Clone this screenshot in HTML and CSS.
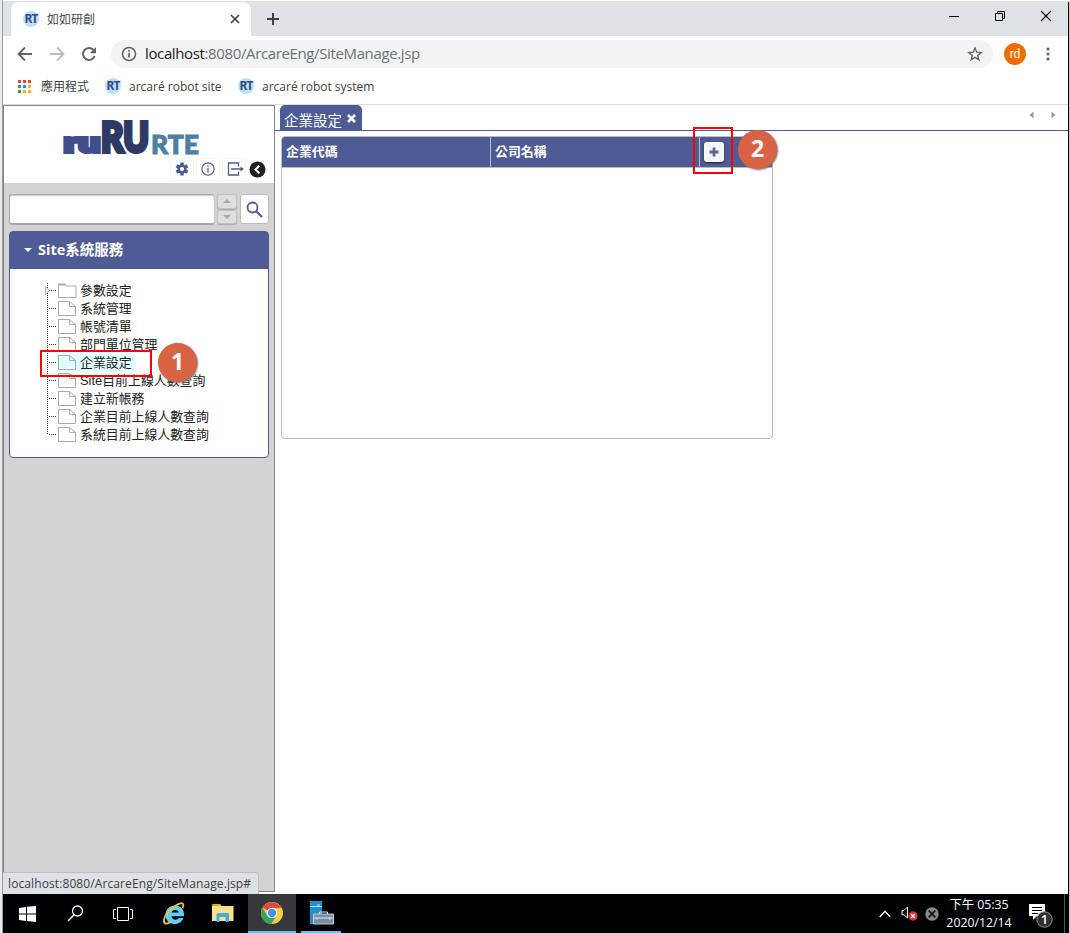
FILE: index.html
```html
<!DOCTYPE html>
<html lang="zh-Hant">
<head>
<meta charset="utf-8">
<title>如如研創</title>
<link rel="stylesheet" href="styles.css">
</head>
<body>
<div class="screen">
  <aside class="edge"></aside>
  <div class="window">
    <div class="tabstrip">
      <div class="browser-tab">
        <span class="favicon">RT</span>
        <span class="tab-title">如如研創</span>
        <svg class="tab-close" width="10" height="10" viewBox="0 0 10 10"><path d="M1 1l8 8M9 1l-8 8" stroke="#3c4043" stroke-width="1.7"/></svg>
      </div>
      <svg class="new-tab" width="12" height="12" viewBox="0 0 12 12"><path d="M6 0v12M0 6h12" stroke="#3c4043" stroke-width="2"/></svg>
      <div class="window-buttons">
        <svg width="12" height="12" viewBox="0 0 12 12"><path d="M1 6.5h10" stroke="#000"/></svg>
        <svg width="12" height="12" viewBox="0 0 12 12"><path d="M1.5 3.5h7v7h-7zM3.500 3V1.500h7v7H9" fill="none" stroke="#000"/></svg>
        <svg width="12" height="12" viewBox="0 0 12 12"><path d="M1 1l10 10M11 1L1 11" stroke="#000" stroke-width="1.100"/></svg>
      </div>
    </div>
    <div class="toolbar">
      <svg class="nav" width="16" height="16" viewBox="0 0 16 16"><path d="M15 8H2M8 1.500L1.500 8L8 14.500" fill="none" stroke="#5f6368" stroke-width="1.800"/></svg>
      <svg class="nav" width="16" height="16" viewBox="0 0 16 16"><path d="M1 8h13M8 1.500L14.500 8L8 14.500" fill="none" stroke="#babcbe" stroke-width="1.800"/></svg>
      <svg class="nav" width="16" height="16" viewBox="0 0 16 16"><path d="M13.600 10.200A6 6 0 1 1 12.500 4" fill="none" stroke="#5f6368" stroke-width="2"/><path d="M15 1v6.200H8.800z" fill="#5f6368"/></svg>
      <div class="omnibox">
        <svg width="16" height="16" viewBox="0 0 16 16"><circle cx="8" cy="8" r="6.500" fill="none" stroke="#5f6368" stroke-width="1.500"/><path d="M8 7v4.500M8 4v1.700" stroke="#5f6368" stroke-width="1.700"/></svg>
        <span class="url"><b>localhost</b>:8080/ArcareEng/SiteManage.jsp</span>
        <svg class="star" width="16" height="16" viewBox="0 0 16 16"><path d="M8 2l1.700 4.200 4.500.3-3.500 2.900 1.100 4.400L8 11.400l-3.800 2.400 1.100-4.400L1.800 6.500l4.500-.3z" fill="none" stroke="#5f6368" stroke-width="1.400"/></svg>
      </div>
      <span class="avatar">rd</span>
      <svg class="kebab" width="4" height="14" viewBox="0 0 4 14" fill="#5f6368"><circle cx="2" cy="2" r="1.600"/><circle cx="2" cy="7" r="1.600"/><circle cx="2" cy="12" r="1.600"/></svg>
    </div>
    <div class="bookmarks">
      <svg class="apps" width="13" height="13" viewBox="0 0 13 13"><path d="M0 0h3v3H0zM5 0h3v3H5zM10 0h3v3h-3z" fill="#ea4335"/><path d="M0 5h3v3H0zM0 10h3v3H0z" fill="#2ea052"/><path d="M5 5h3v3H5z" fill="#1a8cf0"/><path d="M5 10h3v3H5z" fill="#f9b418"/><path d="M10 5h3v3h-3zM10 10h3v3h-3z" fill="#f9b418"/></svg>
      <span class="apps-label">應用程式</span>
      <span class="favicon">RT</span><span class="bookmark first">arcaré robot site</span>
      <span class="favicon">RT</span><span class="bookmark">arcaré robot system</span>
    </div>
    <div class="page">
      <div class="sidebar">
        <div class="brand">
          <svg class="logo" width="140" height="40" viewBox="0 0 140 40">
            <g font-family="Lato" font-weight="900">
              <text x="2" y="33" font-size="27" textLength="36" lengthAdjust="spacingAndGlyphs" fill="#404f8c" stroke="#404f8c" stroke-width="4">ru</text>
              <text x="39" y="33" font-size="41" textLength="48" lengthAdjust="spacingAndGlyphs" fill="#2e3966" stroke="#2e3966" stroke-width="4">RU</text>
              <text x="89" y="34.500" font-size="27" textLength="48" lengthAdjust="spacingAndGlyphs" fill="#4d7f9e" stroke="#4d7f9e" stroke-width="1">RTE</text>
            </g>
          </svg>
          <div class="tools">
            <span class="tool"><svg width="14" height="14" viewBox="0 0 14 14"><g stroke="#4f5b94" stroke-width="3.400"><path d="M7 .6v12.800M1.450 3.800l11.100 6.400M1.450 10.200l11.100-6.400"/></g><circle cx="7" cy="7" r="4.700" fill="#4f5b94"/><circle cx="7" cy="7" r="2.100" fill="#fff"/></svg></span>
            <span class="tool"><svg width="14" height="14" viewBox="0 0 14 14"><circle cx="7" cy="7" r="6.100" fill="none" stroke="#4f5b94" stroke-width="1.200"/><path d="M7 6v4.500M7 3.500V5" stroke="#4f5b94" stroke-width="1.300"/></svg></span>
            <span class="tool"><svg width="17" height="14" viewBox="0 0 17 14"><path d="M11.500 4.500V1h-10v12h10V9.500M4 7h10.500" fill="none" stroke="#4f5b94" stroke-width="1.300"/><path d="M13.500 4.500L17 7l-3.500 2.500z" fill="#4f5b94"/></svg></span>
            <svg class="collapse" width="17" height="17" viewBox="0 0 17 17"><circle cx="8.500" cy="8.500" r="8" fill="#231f20"/><path d="M10.300 4.700L6.500 8.500l3.800 3.800" fill="none" stroke="#fff" stroke-width="2"/></svg>
          </div>
        </div>
        <div class="search">
          <input class="search-input" type="text" aria-label="search">
          <div class="spinner">
            <span><svg width="8" height="4" viewBox="0 0 8 4"><path d="M0 4l4-4 4 4z" fill="#a5a9bd"/></svg></span>
            <span><svg width="8" height="4" viewBox="0 0 8 4"><path d="M0 0l4 4 4-4z" fill="#a5a9bd"/></svg></span>
          </div>
          <button class="search-button" aria-label="search"><svg width="17" height="17" viewBox="0 0 17 17"><circle cx="6.500" cy="6.500" r="5" fill="none" stroke="#4f5b94" stroke-width="1.800"/><path d="M10 10l6 6" stroke="#4f5b94" stroke-width="2.200"/></svg></button>
        </div>
        <div class="accordion">
          <div class="accordion-head"><svg width="8" height="4" viewBox="0 0 8 4"><path d="M0 0l4 4 4-4z" fill="#fff"/></svg><span>Site系統服務</span></div>
          <ul class="tree">
            <li><svg class="expander" width="5" height="9" viewBox="0 0 5 9"><path d="M.5.800v7.400L4.300 4.500z" fill="#fff" stroke="#999" stroke-width=".8"/></svg><svg width="19" height="15" viewBox="0 0 19 15"><path d="M.5 1.500h7l1 1.500h9.500v11.500H.5z" fill="#fff" stroke="#aaa"/><path d="M0 1.500h8" stroke="#aaa" stroke-width="2"/></svg><span>參數設定</span></li>
            <li><svg width="19" height="15" viewBox="0 0 19 15"><path d="M.5.500h11l6 5v9H.5zM11.500.500v5H17.500" fill="#fff" stroke="#aaa"/></svg><span>系統管理</span></li>
            <li><svg width="19" height="15" viewBox="0 0 19 15"><path d="M.5.500h11l6 5v9H.5zM11.500.500v5H17.500" fill="#fff" stroke="#aaa"/></svg><span>帳號清單</span></li>
            <li><svg width="19" height="15" viewBox="0 0 19 15"><path d="M.5.500h11l6 5v9H.5zM11.500.500v5H17.500" fill="#fff" stroke="#aaa"/></svg><span>部門單位管理</span></li>
            <li class="selected"><svg width="19" height="15" viewBox="0 0 19 15"><path d="M.5.500h11l6 5v9H.5zM11.500.500v5H17.500" fill="none" stroke="#aaa"/></svg><span>企業設定</span></li>
            <li><svg width="19" height="15" viewBox="0 0 19 15"><path d="M.5.500h11l6 5v9H.5zM11.500.500v5H17.500" fill="#fff" stroke="#aaa"/></svg><span class="mixed">Site目前上線人數查詢</span></li>
            <li><svg width="19" height="15" viewBox="0 0 19 15"><path d="M.5.500h11l6 5v9H.5zM11.500.500v5H17.500" fill="#fff" stroke="#aaa"/></svg><span>建立新帳務</span></li>
            <li><svg width="19" height="15" viewBox="0 0 19 15"><path d="M.5.500h11l6 5v9H.5zM11.500.500v5H17.500" fill="#fff" stroke="#aaa"/></svg><span>企業目前上線人數查詢</span></li>
            <li><svg width="19" height="15" viewBox="0 0 19 15"><path d="M.5.500h11l6 5v9H.5zM11.500.500v5H17.500" fill="#fff" stroke="#aaa"/></svg><span>系統目前上線人數查詢</span></li>
          </ul>
        </div>
      </div>
      <main class="main">
        <div class="page-tabs">
          <div class="page-tab"><span>企業設定</span><svg width="9" height="9" viewBox="0 0 9 9"><path d="M1 1l7 7M8 1L1 8" stroke="#fff" stroke-width="2.600"/></svg></div>
          <div class="tab-scroll"><svg width="5" height="8" viewBox="0 0 5 8"><path d="M4.500 .5v7L.5 4z" fill="#999"/></svg><svg width="5" height="8" viewBox="0 0 5 8"><path d="M.5 .5v7l4-3.500z" fill="#999"/></svg></div>
        </div>
        <div class="grid">
          <div class="grid-head">
            <span>企業代碼</span><span>公司名稱</span>
            <span class="add-cell"><button class="add" aria-label="add"><svg width="10" height="10" viewBox="0 0 10 10"><path d="M5 .5v9M.5 5h9" stroke="#5b679d" stroke-width="2.800"/></svg></button></span>
          </div>
        </div>
      </main>
    </div>
    <footer class="taskbar">
      <div class="task"><svg width="17" height="16" viewBox="0 0 17 16"><path d="M0 2l7-1v6.500H0zM8 .8L17 0v7.500H8zM0 8.500h7V15l-7-1zM8 8.500h9V16l-9-1z" fill="#fff"/></svg></div>
      <div class="task"><svg width="17" height="17" viewBox="0 0 17 17"><circle cx="10.500" cy="6" r="5" fill="none" stroke="#fff" stroke-width="1.300"/><path d="M7 9.700L1 16" stroke="#fff" stroke-width="1.500"/></svg></div>
      <div class="task"><svg width="20" height="14" viewBox="0 0 20 14"><path d="M4.500.5h11v13h-11zM3 2.500H.5v9H3M17 2.500h2.500v9H17" fill="none" stroke="#fff"/></svg></div>
      <div class="task ie"><svg width="24" height="24" viewBox="0 0 24 24"><path d="M21.500 16C19.500 20.500 16 22 12.500 22C7 22 3.500 18 3.500 13C3.500 7.500 7.500 3.500 13 3.500C19 3.500 22.500 8 22 14.200H9.500C10 18.300 15.500 18.500 16.800 16zM9.500 10.500H16.800C16.300 7 10 7 9.500 10.500z" fill="#66cdf5"/><path d="M20.500 6C23 .8 20 .2 15 2.700C7 7 1.500 15 2 19.500C2.500 23 6.500 21.500 9 20" fill="none" stroke="#f5c13c" stroke-width="1.800"/></svg></div>
      <div class="task"><svg width="22" height="18" viewBox="0 0 22 18"><path d="M0 1l1-1h7l1.500 2H21.500v15H0z" fill="#ffe08a"/><path d="M0 1l1-1h7l1 2H0z" fill="#dda832"/><path d="M4.500 10l1.500-1h9.500l1.500 1v8h-3.500v-5h-6v5h-3z" fill="#3fabe0"/></svg></div>
      <div class="task active"><svg width="22" height="22" viewBox="0 0 22 22"><circle cx="11" cy="11" r="11" fill="#ffce44"/><path d="M11 11L1.500 5.500A11 11 0 0 1 20.600 6H11z" fill="#dd4b3e"/><path d="M1.500 5.500A11 11 0 0 0 10.400 22L15.500 13.600 11 11 6.300 13.700z" fill="#36a361"/><circle cx="11" cy="11" r="5.200" fill="#fff"/><circle cx="11" cy="11" r="4.200" fill="#4c8bf5"/></svg></div>
      <div class="task open"><svg width="25" height="24" viewBox="0 0 25 24"><path d="M1 0h12v23H1z" fill="#2290d5"/><path d="M1 5.500h12M8 4h3" stroke="#b7e3ff"/><path d="M4.500 13h20v10h-20z" fill="#7890a5" stroke="#bdcbd6"/><path d="M10.500 13v-2h8v2M4.500 17h20M8 16v3M21 16v3" fill="none" stroke="#dbe4eb"/></svg></div>
      <div class="tray">
        <svg class="chevron" width="12" height="8" viewBox="0 0 12 8"><path d="M.7 7L6 1.300 11.300 7" fill="none" stroke="#fff" stroke-width="1.300"/></svg>
        <svg class="volume" width="17" height="15" viewBox="0 0 17 15"><path d="M1 4.500h2L6.500 1v11L3 8.800H1z" fill="none" stroke="#fff"/><circle cx="12" cy="10" r="4.700" fill="#df2935"/><path d="M10 8l4 4M14 8l-4 4" stroke="#fff" stroke-width="1.300"/></svg>
        <svg class="blocked" width="14" height="14" viewBox="0 0 14 14"><circle cx="7" cy="7" r="6.700" fill="#8a8a8a"/><path d="M3.700 3.700l6.600 6.600M10.300 3.700l-6.600 6.600" stroke="#111" stroke-width="1.700"/></svg>
        <div class="clock"><span class="time">下午 05:35</span><span class="date">2020/12/14</span></div>
        <div class="notice"><svg width="25" height="25" viewBox="0 0 25 25"><path d="M1 1h16v12H9l-4 4v-4H1z" fill="#fff"/><path d="M4 4.500h10M4 7.500h10M4 10.500h6" stroke="#000"/><circle cx="16.500" cy="16.500" r="7.700" fill="#303030" stroke="#969696"/><text x="16.500" y="21" text-anchor="middle" font-family="Open Sans" font-size="13" font-weight="600" fill="#fff">1</text></svg></div>
        <i class="desktop-peek"></i>
      </div>
    </footer>
  </div>
  <div class="right-edge"></div>
  <div class="status">localhost:8080/ArcareEng/SiteManage.jsp#</div>
  <div class="mark mark-one"></div><div class="step step-one">1</div>
  <div class="mark mark-two"></div><div class="step step-two">2</div>
</div>
</body>
</html>
```
FILE: styles.css
```css
* { box-sizing: border-box; }
body { margin: 0; background: #fff; font-family: "Open Sans", "Noto Sans CJK TC", sans-serif; }
svg { display: block; flex: none; overflow: visible; }
span { white-space: nowrap; }
.screen { position: relative; display: flex; width: 1070px; height: 933px; overflow: hidden; }
.edge { width: 3px; background: #ececec; border-right: 1px solid #999; }
.window { width: 1065px; display: flex; flex-direction: column; padding-top: 1px; }
.right-edge { width: 2px; background: #c8c8c8; border-left: 1px solid #000; margin-top: 2px; }

.tabstrip { height: 35px; background: #dee1e6; display: flex; align-items: center; padding-left: 8px; }
.browser-tab { width: 240px; height: 34px; align-self: flex-end; background: #fff; border-radius: 8px 8px 0 0; display: flex; align-items: center; padding-left: 12px; }
.favicon { width: 16px; height: 16px; border-radius: 50%; background: #b9e2fa; color: #354a80; font: 700 12px/16px "Noto Sans", sans-serif; letter-spacing: -1px; text-align: center; display: flex; justify-content: center; flex: none; }
.tab-title { margin-left: 8px; width: 183px; font-size: 12px; line-height: 18px; padding-top: 2px; color: #45494d; }
.new-tab { margin-left: 16px; }
.window-buttons { margin-left: auto; display: flex; gap: 34px; padding-right: 16px; margin-top: -5px; }

.toolbar { height: 36px; display: flex; align-items: center; padding-left: 14px; }
.nav { margin-right: 16px; }
.omnibox { width: 882px; height: 28px; margin-left: -2px; background: #f1f3f4; border-radius: 14px; display: flex; align-items: center; padding: 0 10px; }
.url { margin-left: 8px; font-size: 15px; line-height: 24px; padding-bottom: 2px; color: #6d7175; letter-spacing: -.37px; }
.url b { font-weight: 400; color: #202124; }
.star { margin-left: auto; }
.avatar { width: 22px; height: 22px; margin-left: 11px; border-radius: 50%; background: #ef6c00; color: #fff; font: 12px/23px Roboto, sans-serif; text-align: center; }
.kebab { margin-left: 20px; }
.bookmarks { height: 33px; border-bottom: 1px solid #dadce0; display: flex; align-items: center; padding: 0 0 4px 15px; font-size: 12px; line-height: 18px; color: #3c4043; }
.apps-label { margin: 0 16px 0 10px; padding-top: 2px; }
.bookmark { margin-left: 8px; padding-top: 2px; }
.bookmark.first { width: 109px; }

.page { height: 789px; display: flex; }
.sidebar { width: 272px; height: 787px; border: 1px solid #858585; background: #d3d3d3; }
.brand { height: 77px; background: #fff; display: flex; flex-direction: column; padding-top: 13px; }
.logo { margin-left: 58px; }
.tools { height: 24px; margin-top: -2px; display: flex; align-items: center; padding-left: 166px; gap: 2px; }
.tool { width: 24px; height: 23px; display: flex; align-items: center; justify-content: center; border: 1px solid #f5f5f5; border-radius: 2px; }
.tool:nth-child(3) svg { margin-left: 2px; }
.collapse { margin-left: 1px; }
.search { width: 260px; height: 31px; margin: 11px 0 0 5px; display: flex; }
.search-input { width: 206px; height: 31px; border: 1px solid #aaa; border-bottom: 2px solid #a4a4a4; border-right-color: #ccc; border-radius: 3px; padding: 0 4px; background: #fff; box-shadow: inset 0 1px 1px #ccc; }
.spinner { width: 20px; height: 30px; margin: 0 3px 0 2px; display: flex; flex-direction: column; gap: 1px; }
.spinner span { flex: 1; display: flex; align-items: center; justify-content: center; background: #dedede; border: 1px solid #c2c2c2; border-radius: 3px; box-shadow: 0 1px 1px #aaa; }
.search-button { width: 29px; height: 30px; display: flex; align-items: center; justify-content: center; padding: 1px 0 0; border: 1px solid #bbb; border-radius: 3px; background: #fff; }
.search-button svg { margin-left: -1px; }
.accordion { width: 260px; height: 227px; margin: 6px 0 0 5px; background: #fff; border: 1px solid #4f5b94; border-radius: 4px; }
.accordion-head { height: 37px; background: #4f5b94; color: #fff; display: flex; align-items: center; padding: 0 0 2px 14px; font-size: 14.500px; line-height: 20px; font-weight: 700; gap: 6px; }
.tree { height: 163px; margin: 12px 0 0 37px; padding: 0; list-style: none; background: repeating-linear-gradient(#333 0 1px, transparent 1px 2px) 0 2px / 1px 152px no-repeat; }
.tree li { position: relative; height: 18px; display: flex; align-items: center; padding-left: 11px; font-size: 12.900px; line-height: 18px; color: #222; background: repeating-linear-gradient(90deg, #333 0 1px, transparent 1px 2px) 2px 9px / 7px 1px no-repeat; }
.tree li span { margin-left: 3px; }
.tree .mixed { font-family: "Liberation Sans", "Noto Sans CJK TC", sans-serif; padding-top: 1px; }
.tree .expander { position: absolute; left: -2px; top: 5px; }
.tree .selected::before { content: ""; position: absolute; left: 10px; top: 1px; width: 79px; height: 17px; background: #e0ffff; }
.tree .selected > * { position: relative; }

.main { flex: 1; }
.page-tabs { height: 26px; border-bottom: 1px solid #4f5b94; display: flex; padding-left: 5px; justify-content: space-between; }
.page-tab { width: 82px; height: 25px; background: #4f5b94; border-radius: 5px 5px 0 0; display: flex; align-items: center; padding: 1px 0 0 4px; color: #fff; }
.page-tab span { width: 63px; font-size: 14.500px; line-height: 20px; padding-top: 6px; }
.tab-scroll { display: flex; gap: 17px; padding: 6px 12px 0 0; }
.grid { width: 492px; height: 303px; margin: 5px 0 0 6px; border: 1px solid #bcbcbc; border-radius: 4px; overflow: hidden; }
.grid-head { height: 31px; background: #4f5b94; color: #fff; border-bottom: 1px solid #bcbcbc; display: grid; grid-template-columns: 209px 209px 1fr; font-size: 12.900px; font-weight: 700; line-height: 29px; }
.grid-head > span { padding-left: 4px; border-right: 1px solid #bcbcbc; }
.grid-head > .add-cell { border: 0; display: flex; align-items: center; }
.add { width: 20px; height: 20px; padding: 0; display: flex; align-items: center; justify-content: center; border: 0; border-radius: 3px; background: #f6f6f6; box-shadow: 0 1px 2px #222; }

.taskbar { height: 39px; background: #000104; display: flex; color: #fff; }
.task { width: 49px; height: 39px; display: flex; align-items: center; justify-content: center; }
.task:nth-child(2) { width: 47px; }
.task:nth-child(3) { width: 48px; }
.task.ie { width: 53px; }
.task:nth-child(5) { width: 46px; padding-bottom: 1px; }
.task.active { width: 48px; margin-left: 2px; background: #37383b; border-bottom: 2px solid #76b9ed; }
.task.open { width: 40px; margin-left: 5px; border-bottom: 2px solid #76b9ed; }
.tray { margin-left: auto; display: flex; align-items: center; }
.chevron { margin-right: 10px; }
.volume { margin-right: 7px; }
.clock { width: 70px; margin: 0 14px 0 5px; display: flex; flex-direction: column; align-items: center; font-size: 12.300px; line-height: 18px; }
.notice { width: 36px; padding-top: 3px; }
.desktop-peek { width: 4px; height: 39px; border-left: 1px solid #555; }

.status { position: absolute; left: 3px; top: 872px; width: 256px; height: 22px; padding-left: 5px; background: #dee1e6; border: 1px solid #bbbec2; border-left: 0; border-bottom: 0; border-radius: 0 4px 0 0; font-size: 12px; line-height: 21px; letter-spacing: .1px; color: #3c4043; white-space: nowrap; }
.mark { position: absolute; border: 2px solid #f00; }
.mark-one { left: 40px; top: 350px; width: 112px; height: 27px; }
.mark-two { left: 693px; top: 127px; width: 40px; height: 47px; }
.step { position: absolute; width: 39px; height: 39px; border-radius: 50%; background: #d86344; color: #fff; font: 700 23px/37px "Open Sans", sans-serif; text-align: center; box-shadow: 1px 1px 2px #777; }
.step-one { left: 158px; top: 343px; }
.step-two { left: 738px; top: 130px; }
```
